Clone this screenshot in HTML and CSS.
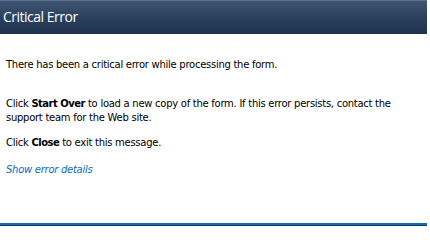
FILE: index.html
```html
<!DOCTYPE html>
<html>
<head>
<meta charset="utf-8">
<link rel="stylesheet" href="styles.css">
</head>
<body>
<div class="dialog">
  <div class="header">Critical Error</div>
  <div class="content">
    <p class="msg first">There has been a critical error while processing the form.</p>
    <p class="msg">Click <b>Start Over</b> to load a new copy of the form. If this error persists, contact the support team for the Web site.</p>
    <p class="msg last">Click <b>Close</b> to exit this message.</p>
    <p class="msg"><a class="details" href="#">Show error details</a></p>
  </div>
  <div class="footer"></div>
</div>
</body>
</html>
```
FILE: styles.css
```css
html, body {
  margin: 0;
  padding: 0;
  background: #fff;
}
.dialog {
  width: 430px;
  height: 226px;
  display: flex;
  flex-direction: column;
  font-family: "DejaVu Sans", Verdana, sans-serif;
  font-size: 10px;
  letter-spacing: -0.27px;
  color: #000;
}
.header {
  height: 34px;
  box-sizing: border-box;
  border-top: 1px solid #5b6f89;
  background: linear-gradient(#3e5571, #2a3f5c 55%, #1f3350);
  color: #fff;
  font-family: "Open Sans", "DejaVu Sans", sans-serif;
  font-size: 14px;
  letter-spacing: -0.5px;
  line-height: 32px;
  padding-left: 3px;
  margin-right: 3px;
}
.content {
  flex: 1;
  padding: 24px 6px 0 6px;
}
.msg {
  margin: 0 0 11px 0;
  line-height: 14px;
}
.msg.first {
  margin-bottom: 25px;
}
.msg.last {
  margin-bottom: 13px;
}
b {
  font-weight: bold;
  letter-spacing: -0.5px;
}
.details {
  color: #0b6cc0;
  font-style: italic;
  text-decoration: none;
}
.footer {
  border-top: 2px solid #0a6fc2;
  background: #1a3552;
  height: 1px;
  margin-right: 3px;
}
```
